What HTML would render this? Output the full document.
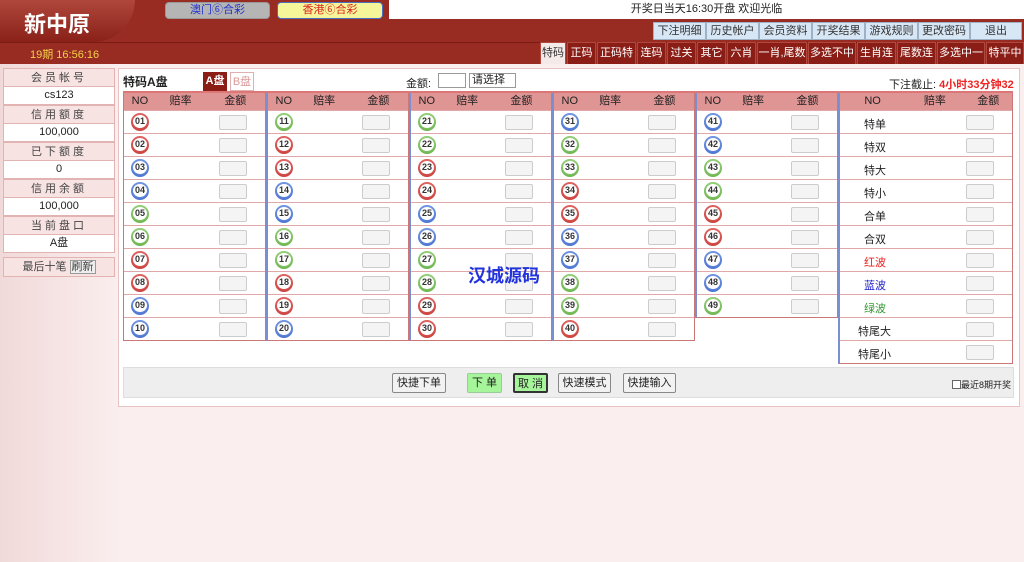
<!DOCTYPE html>
<html><head><meta charset="utf-8"><style>
*{margin:0;padding:0;box-sizing:border-box}
body{width:1024px;height:562px;overflow:hidden;font-family:"Liberation Sans","Noto Sans CJK SC",sans-serif;font-size:11px;color:#222;background:linear-gradient(90deg,#f1d9d9 0,#fbeeee 120px,#fbeeee 100%);position:relative}
.hdr{position:absolute;left:0;top:0;width:1024px;height:64px;background:#982b22}
.logo{position:absolute;left:0;top:0;width:135px;height:42px;background:linear-gradient(180deg,#b0473c,#8a2119);border-radius:0 0 60px 0;color:#fff;font-size:22px;font-weight:bold;padding:7px 0 0 24px}
.sub{position:absolute;left:0;top:42px;width:1024px;height:22px;border-top:1px solid #7a1b14}
.time{position:absolute;left:30px;top:46px;color:#f3d24a;font-size:11px}
.tp{position:absolute;top:2px;height:17px;border-radius:4px;text-align:center;font-size:11px;line-height:15px}
.wbar{position:absolute;left:389px;top:0;width:635px;height:19px;background:#fff;text-align:center;line-height:19px;font-size:11px}
.nb{position:absolute;top:22px;height:18px;background:#d8e7f5;border:1px solid #9fb1c5;text-align:center;line-height:16px;font-size:11px;color:#333}
.tb{position:absolute;top:42px;height:22px;background:#8a1d15;color:#fff;border:1px solid #b1473d;border-bottom:none;text-align:center;line-height:21px;font-size:11px}
.side{position:absolute;left:3px;top:68px;width:112px}
.sl{height:19px;background:#f8e3e3;border:1px solid #e2b3b3;text-align:center;line-height:18px;letter-spacing:3px;color:#444}
.sv{height:18px;background:#fff;border:1px solid #e2b3b3;border-top:none;text-align:center;line-height:17px}
.main{position:absolute;left:118px;top:68px;width:902px;height:339px;background:#fff;border:1px solid #e8c3c3}
.abs{position:absolute}
.col{position:absolute;top:93px;border:1px solid #c77;border-top:none}
.hd{height:17px;background:#e09595;display:flex;font-size:11px;line-height:16px}
.r{height:23px;border-top:1px solid #e0a8a8;position:relative}
.b{position:absolute;left:7px;top:2px;width:18px;height:18px;border-radius:50%;text-align:center}
.b span{display:block;width:14px;height:13px;margin:2px;border-radius:50%;background:#fff;font-size:9px;line-height:13px;font-weight:bold;color:#333}
.R{background:radial-gradient(circle at 50% 35%,#f08080,#c0302a)}
.B{background:radial-gradient(circle at 50% 35%,#8fb0f0,#3a64c8)}
.G{background:radial-gradient(circle at 50% 35%,#b2e39a,#5aa83a)}
.i{position:absolute;right:18px;top:4px;width:28px;height:15px;border:1px solid #ccc;background:#f4f4f4;border-radius:2px}
.lbl{position:absolute;left:24px;top:5px}
.btn{position:absolute;top:373px;height:20px;border:1px solid #888;background:#f2f2f2;border-radius:2px;font-size:11px;line-height:18px;text-align:center}
</style></head><body>
<div class="hdr"></div>
<div class="logo">新中原</div>
<div class="sub"></div>
<div class="time">19期 16:56:16</div>
<div class="tp" style="left:165px;width:105px;background:#b5b5b5;border:1px solid #999;color:#2233cc">澳门⑥合彩</div>
<div class="tp" style="left:277px;width:106px;background:#f5f59a;border:1px solid #4a6fc0;color:#d22">香港⑥合彩</div>
<div class="wbar">开奖日当天16:30开盘 欢迎光临</div>
<div class="nb" style="left:653px;width:53px">下注明细</div>
<div class="nb" style="left:706px;width:53px">历史帐户</div>
<div class="nb" style="left:759px;width:53px">会员资料</div>
<div class="nb" style="left:812px;width:53px">开奖结果</div>
<div class="nb" style="left:865px;width:53px">游戏规则</div>
<div class="nb" style="left:918px;width:52px">更改密码</div>
<div class="nb" style="left:970px;width:52px">退出</div>
<div class="tb" style="left:540px;width:26px;background:#f5eaea;color:#333">特码</div>
<div class="tb" style="left:567px;width:29px">正码</div>
<div class="tb" style="left:597px;width:39px">正码特</div>
<div class="tb" style="left:637px;width:29px">连码</div>
<div class="tb" style="left:667px;width:29px">过关</div>
<div class="tb" style="left:697px;width:29px">其它</div>
<div class="tb" style="left:727px;width:29px">六肖</div>
<div class="tb" style="left:757px;width:50px">一肖,尾数</div>
<div class="tb" style="left:808px;width:48px">多选不中</div>
<div class="tb" style="left:857px;width:39px">生肖连</div>
<div class="tb" style="left:897px;width:39px">尾数连</div>
<div class="tb" style="left:937px;width:48px">多选中一</div>
<div class="tb" style="left:986px;width:38px">特平中</div>

<div class="side">
<div class="sl">会员帐号</div><div class="sv">cs123</div>
<div class="sl">信用额度</div><div class="sv">100,000</div>
<div class="sl">已下额度</div><div class="sv">0</div>
<div class="sl">信用余额</div><div class="sv">100,000</div>
<div class="sl">当前盘口</div><div class="sv">A盘</div>
<div class="sl" style="margin-top:4px;height:20px;letter-spacing:0">最后十笔 <span style="border:1px solid #999;background:#eee;padding:0 1px">刷新</span></div>
</div>

<div class="main"></div>
<div class="abs" style="left:123px;top:73px;font-size:12px;font-weight:bold">特码A盘</div>
<div class="abs" style="left:203px;top:72px;width:24px;height:19px;background:#8a1d15;color:#fff;font-weight:bold;text-align:center;line-height:19px">A盘</div>
<div class="abs" style="left:230px;top:72px;width:24px;height:19px;border:1px solid #e0b0b0;color:#d99;text-align:center;line-height:18px">B盘</div>
<div class="abs" style="left:406px;top:75px">金额:</div>
<div class="abs" style="left:438px;top:73px;width:28px;height:15px;border:1px solid #999;background:#fff"></div>
<div class="abs" style="left:469px;top:73px;width:47px;height:15px;border:1px solid #999;background:#fff;line-height:13px;padding-left:2px">请选择 ⌄</div>
<div class="abs" style="left:889px;top:76px">下注截止: <b style="color:#e22">4小时33分钟32秒</b></div>
<div class="abs" style="left:123px;top:91px;width:890px;height:2px;background:#d77"></div>

<div class="col" style="left:123px;width:143px"><div class="hd"><span style="width:32px;text-align:center">NO</span><span style="width:50px;text-align:center">赔率</span><span style="width:60px;text-align:center">金额</span></div>
<div class="r"><div class="b R"><span>01</span></div><div class="i"></div></div>
<div class="r"><div class="b R"><span>02</span></div><div class="i"></div></div>
<div class="r"><div class="b B"><span>03</span></div><div class="i"></div></div>
<div class="r"><div class="b B"><span>04</span></div><div class="i"></div></div>
<div class="r"><div class="b G"><span>05</span></div><div class="i"></div></div>
<div class="r"><div class="b G"><span>06</span></div><div class="i"></div></div>
<div class="r"><div class="b R"><span>07</span></div><div class="i"></div></div>
<div class="r"><div class="b R"><span>08</span></div><div class="i"></div></div>
<div class="r"><div class="b B"><span>09</span></div><div class="i"></div></div>
<div class="r"><div class="b B"><span>10</span></div><div class="i"></div></div>
</div>
<div class="col" style="left:266px;width:143px;border-left:2px solid #7b8fd0"><div class="hd"><span style="width:32px;text-align:center">NO</span><span style="width:50px;text-align:center">赔率</span><span style="width:60px;text-align:center">金额</span></div>
<div class="r"><div class="b G"><span>11</span></div><div class="i"></div></div>
<div class="r"><div class="b R"><span>12</span></div><div class="i"></div></div>
<div class="r"><div class="b R"><span>13</span></div><div class="i"></div></div>
<div class="r"><div class="b B"><span>14</span></div><div class="i"></div></div>
<div class="r"><div class="b B"><span>15</span></div><div class="i"></div></div>
<div class="r"><div class="b G"><span>16</span></div><div class="i"></div></div>
<div class="r"><div class="b G"><span>17</span></div><div class="i"></div></div>
<div class="r"><div class="b R"><span>18</span></div><div class="i"></div></div>
<div class="r"><div class="b R"><span>19</span></div><div class="i"></div></div>
<div class="r"><div class="b B"><span>20</span></div><div class="i"></div></div>
</div>
<div class="col" style="left:409px;width:143px;border-left:2px solid #7b8fd0"><div class="hd"><span style="width:32px;text-align:center">NO</span><span style="width:50px;text-align:center">赔率</span><span style="width:60px;text-align:center">金额</span></div>
<div class="r"><div class="b G"><span>21</span></div><div class="i"></div></div>
<div class="r"><div class="b G"><span>22</span></div><div class="i"></div></div>
<div class="r"><div class="b R"><span>23</span></div><div class="i"></div></div>
<div class="r"><div class="b R"><span>24</span></div><div class="i"></div></div>
<div class="r"><div class="b B"><span>25</span></div><div class="i"></div></div>
<div class="r"><div class="b B"><span>26</span></div><div class="i"></div></div>
<div class="r"><div class="b G"><span>27</span></div><div class="i"></div></div>
<div class="r"><div class="b G"><span>28</span></div><div class="i"></div></div>
<div class="r"><div class="b R"><span>29</span></div><div class="i"></div></div>
<div class="r"><div class="b R"><span>30</span></div><div class="i"></div></div>
</div>
<div class="col" style="left:552px;width:143px;border-left:2px solid #7b8fd0"><div class="hd"><span style="width:32px;text-align:center">NO</span><span style="width:50px;text-align:center">赔率</span><span style="width:60px;text-align:center">金额</span></div>
<div class="r"><div class="b B"><span>31</span></div><div class="i"></div></div>
<div class="r"><div class="b G"><span>32</span></div><div class="i"></div></div>
<div class="r"><div class="b G"><span>33</span></div><div class="i"></div></div>
<div class="r"><div class="b R"><span>34</span></div><div class="i"></div></div>
<div class="r"><div class="b R"><span>35</span></div><div class="i"></div></div>
<div class="r"><div class="b B"><span>36</span></div><div class="i"></div></div>
<div class="r"><div class="b B"><span>37</span></div><div class="i"></div></div>
<div class="r"><div class="b G"><span>38</span></div><div class="i"></div></div>
<div class="r"><div class="b G"><span>39</span></div><div class="i"></div></div>
<div class="r"><div class="b R"><span>40</span></div><div class="i"></div></div>
</div>
<div class="col" style="left:695px;width:143px;border-left:2px solid #7b8fd0"><div class="hd"><span style="width:32px;text-align:center">NO</span><span style="width:50px;text-align:center">赔率</span><span style="width:60px;text-align:center">金额</span></div>
<div class="r"><div class="b B"><span>41</span></div><div class="i"></div></div>
<div class="r"><div class="b B"><span>42</span></div><div class="i"></div></div>
<div class="r"><div class="b G"><span>43</span></div><div class="i"></div></div>
<div class="r"><div class="b G"><span>44</span></div><div class="i"></div></div>
<div class="r"><div class="b R"><span>45</span></div><div class="i"></div></div>
<div class="r"><div class="b R"><span>46</span></div><div class="i"></div></div>
<div class="r"><div class="b B"><span>47</span></div><div class="i"></div></div>
<div class="r"><div class="b B"><span>48</span></div><div class="i"></div></div>
<div class="r"><div class="b G"><span>49</span></div><div class="i"></div></div>
</div>
<div class="col" style="left:838px;width:175px;border-left:2px solid #7b8fd0"><div class="hd"><span style="width:66px;text-align:center">NO</span><span style="width:60px;text-align:center">赔率</span><span style="width:48px;text-align:center">金额</span></div>
<div class="r"><span class="lbl">特单</span><div class="i"></div></div>
<div class="r"><span class="lbl">特双</span><div class="i"></div></div>
<div class="r"><span class="lbl">特大</span><div class="i"></div></div>
<div class="r"><span class="lbl">特小</span><div class="i"></div></div>
<div class="r"><span class="lbl">合单</span><div class="i"></div></div>
<div class="r"><span class="lbl">合双</span><div class="i"></div></div>
<div class="r"><span class="lbl" style="color:#e22">红波</span><div class="i"></div></div>
<div class="r"><span class="lbl" style="color:#22c">蓝波</span><div class="i"></div></div>
<div class="r"><span class="lbl" style="color:#393">绿波</span><div class="i"></div></div>
<div class="r"><span class="lbl" style="left:18px">特尾大</span><div class="i"></div></div>
<div class="r"><span class="lbl" style="left:18px">特尾小</span><div class="i"></div></div>
</div>

<div class="abs" style="left:468px;top:262px;color:#2233dd;font-size:18px;font-weight:bold">汉城源码</div>

<div class="abs" style="left:123px;top:367px;width:891px;height:31px;background:#eee;border:1px solid #ddd"></div>
<div class="btn" style="left:392px;width:54px">快捷下单</div>
<div class="btn" style="left:467px;width:35px;background:#a6f59a;border-color:#9c9">下 单</div>
<div class="btn" style="left:513px;width:35px;background:#a6f59a;border:2px solid #333">取 消</div>
<div class="btn" style="left:558px;width:53px">快速模式</div>
<div class="btn" style="left:623px;width:53px">快捷输入</div>
<div class="abs" style="left:952px;top:378px;font-size:9px"><span style="display:inline-block;width:9px;height:9px;border:1px solid #666;vertical-align:-1px;background:#fff"></span>最近8期开奖</div>
</body></html>
